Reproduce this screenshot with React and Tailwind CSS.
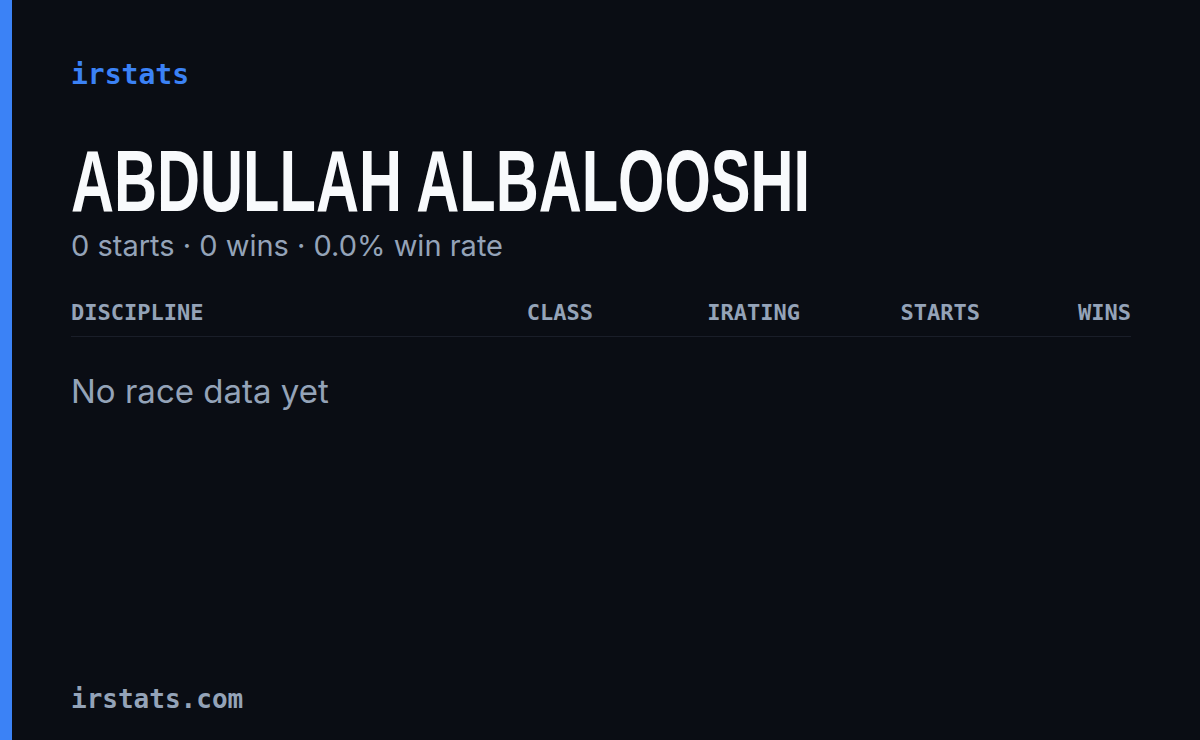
import React from 'react';

const columns = [
  { name: 'Class', width: 'w-[120px]' },
  { name: 'iRating', width: 'w-[207px]' },
  { name: 'Starts', width: 'w-[180px]' },
  { name: 'Wins', width: 'w-[151px]' },
];

const App = () => {
  return (
    <div className="w-[1200px] h-[740px] bg-[#0a0d14] border-l-[12px] border-[#3b82f6] flex flex-col pl-[59px] pr-[69px] pt-[55px] pb-[25px]">
      <div className="text-[28px] leading-[40px] font-bold text-[#3b82f6] font-['DejaVu_Sans_Mono',monospace]">
        irstats
      </div>

      {/* condensed display face isn't installed, so squeeze the bold sans */}
      <h1 className="mt-[42px] h-[88px] text-[88px] leading-[88px] font-bold text-[#f8fafc] font-['Liberation_Sans',sans-serif] whitespace-nowrap">
        <span className="inline-block origin-left scale-x-[0.677]">ABDULLAH ALBALOOSHI</span>
      </h1>
      <p className="mt-[3px] text-[29px] leading-[36px] text-[#94a3b8] font-['Inter',sans-serif]">
        0 starts · 0 wins · 0.0% win rate
      </p>

      <div className="mt-[36px] flex items-center pb-[10px] border-b border-[#1a1e29] text-[22px] leading-[26px] font-bold text-[#94a3b8] uppercase font-['DejaVu_Sans_Mono',monospace]">
        <span className="flex-1">Discipline</span>
        {columns.map((col) => (
          <span key={col.name} className={`${col.width} text-right`}>
            {col.name}
          </span>
        ))}
      </div>

      <p className="mt-[34px] text-[33px] leading-[40px] text-[#94a3b8] font-['Inter',sans-serif]">
        No race data yet
      </p>

      <div className="mt-auto text-[26px] leading-[32px] font-bold text-[#94a3b8] font-['DejaVu_Sans_Mono',monospace]">
        irstats.com
      </div>
    </div>
  );
};

export default App;
